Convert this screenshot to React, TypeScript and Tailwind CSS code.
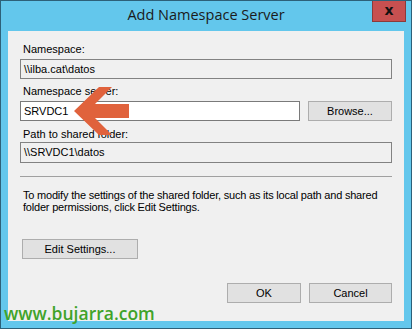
export default function App() {
    const fieldBase = "h-[20px] border flex items-center pl-[3px] text-[11px] leading-none";
    const btn = "h-[20px] bg-[#e1e1e1] border border-[#adadad] flex items-center justify-center text-[11px] text-black";

    return (
        <div className="relative w-[412px] h-[329px] overflow-hidden bg-[#63c7ec] border border-[#2d6179] font-['Liberation_Sans',Arial,sans-serif]">
            {/* Title bar */}
            <div className="h-[30px] flex items-center justify-center">
                <span className="text-[14.5px] text-[#1b1b1b] font-['Open_Sans',sans-serif] leading-none pb-[1px]">Add Namespace Server</span>
            </div>
            <div className="absolute top-0 right-[5px] w-[34px] h-[21px] bg-[#c75050] border border-[#8c3a3a] border-t-0 flex items-center justify-center">
                <span className="text-[14px] font-bold text-[#111] font-['DejaVu_Sans',sans-serif] leading-none pb-[2px]">x</span>
            </div>

            {/* Dialog body */}
            <div className="ml-[7px] w-[396px] h-[290px] bg-[#f0f0f0] px-[12px] flex flex-col text-black">
                <p className="mt-[12px] ml-[3px] text-[11px] leading-[13px]">Namespace:</p>
                <div className={`mt-[3px] bg-[#f0f0f0] border-[#828282] ${fieldBase}`}>\\ilba.cat\datos</div>

                <p className="mt-[6px] ml-[3px] text-[11px] leading-[13px]">Namespace server:</p>
                <div className="mt-[3px] flex gap-[8px]">
                    <div className={`w-[280px] bg-white border-[#7a7a7a] ${fieldBase}`}>SRVDC1</div>
                    <div className={`flex-1 ${btn}`}>Browse...</div>
                </div>

                <p className="mt-[7px] ml-[3px] text-[11px] leading-[13px]">Path to shared folder:</p>
                <div className={`mt-[1px] h-[21px] bg-[#f0f0f0] border-[#828282] ${fieldBase}`}>\\SRVDC1\datos</div>

                <div className="mt-[13px] h-px bg-[#a0a0a0]" />

                <p className="mt-[12px] ml-[3px] text-[11px] leading-[12px] tracking-[-0.2px]">
                    To modify the settings of the shared folder, such as its local path and shared folder permissions, click Edit Settings.
                </p>

                <div className={`mt-[26px] ml-[2px] w-[116px] ${btn} border-[#4a7fae]`}>Edit Settings...</div>

                <div className="mt-[24px] flex justify-end gap-[8px]">
                    <div className={`w-[74px] ${btn}`}>OK</div>
                    <div className={`w-[83px] ${btn}`}>Cancel</div>
                </div>
            </div>

            {/* Callout arrow */}
            <svg className="absolute left-0 top-0" width="412" height="329" viewBox="0 0 412 329">
                <polygon
                    points="73,110 98,86 111,86 94,103 128,103 128,117 94,117 111,134 98,134"
                    fill="#e0623c"
                />
            </svg>

            {/* Watermark */}
            <span className="absolute left-[3px] top-[304px] text-[17.5px] leading-none font-semibold text-[#3fa329] font-['Open_Sans',sans-serif]">www.bujarra.com</span>
        </div>
    );
}
